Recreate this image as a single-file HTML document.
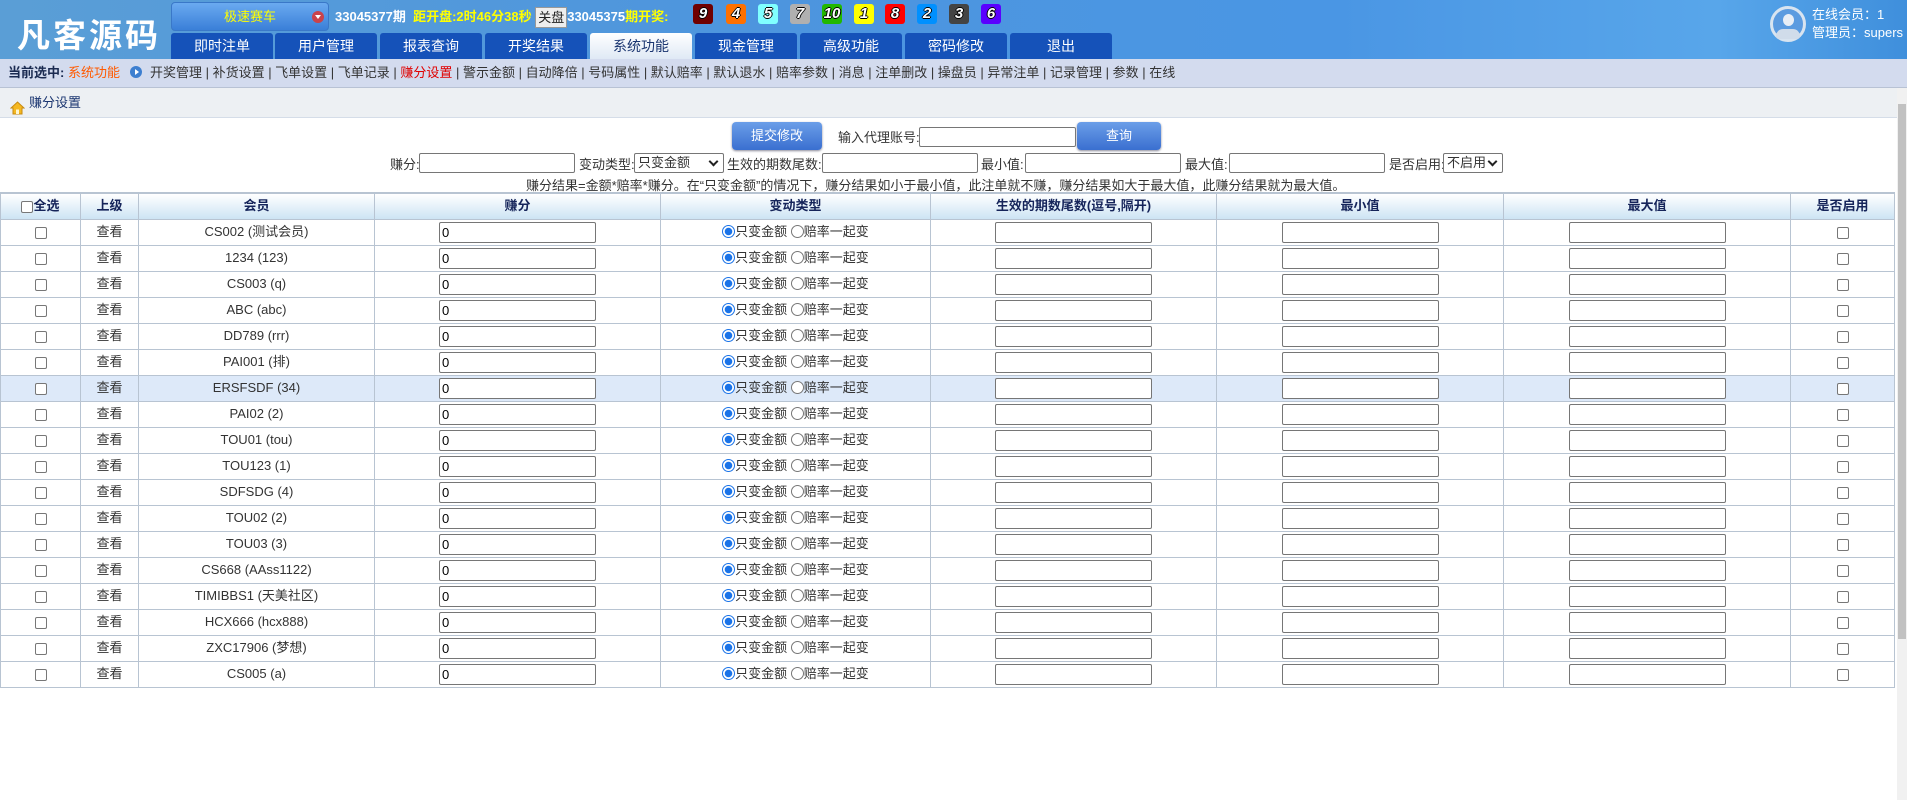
<!DOCTYPE html>
<html><head><meta charset="utf-8">
<style>
*{margin:0;padding:0;box-sizing:border-box}
body{width:1907px;height:800px;overflow:hidden;background:#fff;font-family:"Liberation Sans","Noto Sans CJK SC",sans-serif;font-size:13px;color:#333;position:relative}
#hd{position:absolute;left:0;top:0;width:1907px;height:59px;background:linear-gradient(90deg,#5a9ed6 0%,#4d95de 40%,#4a96e4 70%,#58a6ea 90%,#3f8fdc 100%)}
#logo{position:absolute;left:17px;top:9px;font-size:33px;font-weight:bold;color:#fff;letter-spacing:3px;font-family:"Noto Sans CJK SC",sans-serif}
#dd{position:absolute;left:171px;top:2px;width:158px;height:29px;border-radius:4px;background:linear-gradient(#6aaaf0,#3a7fd8);border:1px solid #3a78c8;color:#ff0;text-align:center;line-height:27px;font-size:13px}
#dd i{position:absolute;left:140px;top:8px;width:12px;height:12px;border-radius:50%;background:#c9424a}
#dd i:after{content:"";position:absolute;left:3px;top:4px;border:3px solid transparent;border-top:4px solid #fff}
#st{position:absolute;left:335px;top:7px;font-weight:bold;font-size:13px;white-space:nowrap;color:#fff;line-height:18px}
#st .y{color:#ff0}
#st .b{display:inline-block;background:#eee;color:#222;font-weight:normal;border:1px solid #999;padding:0 2px;height:21px;line-height:19px;vertical-align:middle}
.ball{position:absolute;top:4px;width:20px;height:20px;border-radius:3px;color:#fff;font-weight:bold;font-style:italic;font-size:15px;text-align:center;line-height:20px;text-shadow:-1px 0 #000,1px 0 #000,0 -1px #000,0 1px #000}
.tab{position:absolute;top:33px;width:102px;height:26px;background:#1552b9;color:#fff;font-size:14px;text-align:center;line-height:26px;border-radius:3px 3px 0 0}
.tab.on{background:linear-gradient(#fff,#dfe9f5);color:#1a3570}
#usr{position:absolute;left:1770px;top:6px;width:36px;height:36px;border-radius:50%;border:3px solid #d8e4f0;background:#5b9be0}
#usr:before{content:"";position:absolute;left:10px;top:5px;width:11px;height:12px;border-radius:50%;background:#e8eef6}
#usr:after{content:"";position:absolute;left:3px;top:20px;width:24px;height:10px;border-radius:10px 10px 4px 4px;background:#d0dcea}
#ui{position:absolute;left:1812px;top:6px;color:#fff;font-size:13px;line-height:18px}
#nav{position:absolute;left:0;top:59px;width:1907px;height:29px;background:#d3dbee;border-bottom:1px solid #b8c2d4;line-height:28px;padding-left:8px;white-space:nowrap;color:#333}
#nav b{color:#1a2a50}
#nav .o{color:#ff5a00}
#nav .r{color:#e00000}
#nav .ic{display:inline-block;width:12px;height:12px;border-radius:50%;background:#3d7fd0;vertical-align:-1px;margin:0 8px 0 10px;position:relative}
#nav .ic:after{content:"";position:absolute;left:5px;top:3px;border:3px solid transparent;border-left:4px solid #fff}
#bc{position:absolute;left:0;top:88px;width:1897px;height:30px;background:#edf0f3;border-bottom:1px solid #d5dde8;line-height:30px;padding-left:29px;color:#1a3570}
#bc i{position:absolute;left:10px;top:8px;width:15px;height:14px}
.btn{position:absolute;height:28px;border-radius:4px;background:linear-gradient(#6b9ee8,#3a6fd0);color:#fff;text-align:center;line-height:28px;font-size:13px;box-shadow:0 1px 2px #889}
.inp{position:absolute;height:20px;border:1px solid #767676;background:#fff;border-radius:2px}
.lbl{position:absolute;white-space:nowrap;color:#333}
.sel{position:absolute;height:20px;border:1px solid #767676;border-radius:2px;background:#fff;font-size:13px;line-height:18px;padding-left:3px}
.sel:after{content:"";position:absolute;right:6px;top:4px;width:5px;height:5px;border-right:2px solid #222;border-bottom:2px solid #222;transform:rotate(45deg)}
table{position:absolute;left:0;top:192px;width:1894px;border-collapse:collapse;table-layout:fixed}
td,th{border:1px solid #b8c4d2;height:26px;text-align:center;font-size:13px;line-height:16px;vertical-align:middle;padding:0}
th{background:linear-gradient(#fff,#cde4f4);color:#15245a;font-weight:bold}
tr:first-child th{border-top:2px solid #b8c4d2}
tr.hl td{background:#dde9f9}
.cb{display:inline-block;width:12px;height:12px;border:1px solid #777;border-radius:2px;background:#fff;vertical-align:middle}
.ti{display:inline-block;width:157px;height:21px;border:1px solid #767676;border-radius:2px;background:#fff;text-align:left;padding-left:2px;line-height:19px;vertical-align:middle;color:#000}
.rd{display:inline-block;width:13px;height:13px;border-radius:50%;border:1px solid #777;vertical-align:middle;background:#fff;margin-top:-2px}
.rd.on{border:1px solid #1a73e8;background:radial-gradient(circle,#1a73e8 0,#1a73e8 3.5px,#fff 4px)}
#sb{position:absolute;left:1897px;top:88px;width:10px;height:712px;background:#f1f1f1}
#sb i{position:absolute;left:1px;top:16px;width:8px;height:535px;background:#c1c1c1}
</style></head><body>
<div id="hd">
<div id="logo">凡客源码</div>
<div id="dd">极速赛车<i></i></div>
<div id="st">33045377期&nbsp; <span class="y">距开盘:</span><span class="y">2时46分38秒</span> <span class="b">关盘</span>33045375<span class="y">期开奖:</span></div>
<div class="ball" style="left:693px;background:#700000">9</div>
<div class="ball" style="left:726px;background:#ff7000">4</div>
<div class="ball" style="left:758px;background:#80ffff">5</div>
<div class="ball" style="left:790px;background:#b0b0b0">7</div>
<div class="ball" style="left:822px;background:#22b800">10</div>
<div class="ball" style="left:854px;background:#ffff00">1</div>
<div class="ball" style="left:885px;background:#ff0000">8</div>
<div class="ball" style="left:917px;background:#0090ff">2</div>
<div class="ball" style="left:949px;background:#444">3</div>
<div class="ball" style="left:981px;background:#5a00ff">6</div>
<div class="tab" style="left:171px">即时注单</div>
<div class="tab" style="left:275px">用户管理</div>
<div class="tab" style="left:380px">报表查询</div>
<div class="tab" style="left:485px">开奖结果</div>
<div class="tab on" style="left:590px">系统功能</div>
<div class="tab" style="left:695px">现金管理</div>
<div class="tab" style="left:800px">高级功能</div>
<div class="tab" style="left:905px">密码修改</div>
<div class="tab" style="left:1010px">退出</div>
<div id="usr"></div>
<div id="ui">在线会员：1<br>管理员：supers</div>
</div>
<div id="nav"><b>当前选中:</b> <span class="o">系统功能</span><span class="ic"></span>开奖管理 | 补货设置 | 飞单设置 | 飞单记录 | <span class="r">赚分设置</span> | 警示金额 | 自动降倍 | 号码属性 | 默认赔率 | 默认退水 | 赔率参数 | 消息 | 注单删改 | 操盘员 | 异常注单 | 记录管理 | 参数 | 在线</div>
<div id="bc"><i><svg width="15" height="14" viewBox="0 0 15 14"><path d="M7.5 1 L14 7 H12 V13 H3 V7 H1 Z" fill="#f5b820" stroke="#c88a10" stroke-width="1"/><rect x="6" y="8.5" width="3" height="4.5" fill="#fff6d0"/></svg></i>赚分设置</div>
<div class="btn" style="left:732px;top:122px;width:90px">提交修改</div>
<div class="lbl" style="left:838px;top:127px">输入代理账号:</div>
<div class="inp" style="left:919px;top:127px;width:157px"></div>
<div class="btn" style="left:1077px;top:122px;width:84px">查询</div>
<div class="lbl" style="left:390px;top:154px">赚分:</div>
<div class="inp" style="left:419px;top:153px;width:156px"></div>
<div class="lbl" style="left:579px;top:154px">变动类型:</div>
<div class="sel" style="left:634px;top:153px;width:90px">只变金额</div>
<div class="lbl" style="left:727px;top:154px">生效的期数尾数:</div>
<div class="inp" style="left:822px;top:153px;width:156px"></div>
<div class="lbl" style="left:981px;top:154px">最小值:</div>
<div class="inp" style="left:1025px;top:153px;width:156px"></div>
<div class="lbl" style="left:1185px;top:154px">最大值:</div>
<div class="inp" style="left:1229px;top:153px;width:156px"></div>
<div class="lbl" style="left:1389px;top:154px">是否启用:</div>
<div class="sel" style="left:1443px;top:153px;width:60px">不启用</div>
<div class="lbl" style="left:526px;top:175px">赚分结果=金额*赔率*赚分。在“只变金额”的情况下，赚分结果如小于最小值，此注单就不赚，赚分结果如大于最大值，此赚分结果就为最大值。</div>
<table>
<colgroup><col style="width:80px"><col style="width:58px"><col style="width:236px"><col style="width:286px"><col style="width:270px"><col style="width:286px"><col style="width:287px"><col style="width:287px"><col style="width:104px"></colgroup>
<tr><th><span class="cb"></span>全选</th><th>上级</th><th>会员</th><th>赚分</th><th>变动类型</th><th>生效的期数尾数(逗号,隔开)</th><th>最小值</th><th>最大值</th><th>是否启用</th></tr>
<tr><td><span class="cb"></span></td><td>查看</td><td>CS002 (测试会员)</td><td><span class="ti">0</span></td><td><span class="rd on"></span>只变金额 <span class="rd"></span>赔率一起变</td><td><span class="ti"></span></td><td><span class="ti"></span></td><td><span class="ti"></span></td><td><span class="cb"></span></td></tr>
<tr><td><span class="cb"></span></td><td>查看</td><td>1234 (123)</td><td><span class="ti">0</span></td><td><span class="rd on"></span>只变金额 <span class="rd"></span>赔率一起变</td><td><span class="ti"></span></td><td><span class="ti"></span></td><td><span class="ti"></span></td><td><span class="cb"></span></td></tr>
<tr><td><span class="cb"></span></td><td>查看</td><td>CS003 (q)</td><td><span class="ti">0</span></td><td><span class="rd on"></span>只变金额 <span class="rd"></span>赔率一起变</td><td><span class="ti"></span></td><td><span class="ti"></span></td><td><span class="ti"></span></td><td><span class="cb"></span></td></tr>
<tr><td><span class="cb"></span></td><td>查看</td><td>ABC (abc)</td><td><span class="ti">0</span></td><td><span class="rd on"></span>只变金额 <span class="rd"></span>赔率一起变</td><td><span class="ti"></span></td><td><span class="ti"></span></td><td><span class="ti"></span></td><td><span class="cb"></span></td></tr>
<tr><td><span class="cb"></span></td><td>查看</td><td>DD789 (rrr)</td><td><span class="ti">0</span></td><td><span class="rd on"></span>只变金额 <span class="rd"></span>赔率一起变</td><td><span class="ti"></span></td><td><span class="ti"></span></td><td><span class="ti"></span></td><td><span class="cb"></span></td></tr>
<tr><td><span class="cb"></span></td><td>查看</td><td>PAI001 (排)</td><td><span class="ti">0</span></td><td><span class="rd on"></span>只变金额 <span class="rd"></span>赔率一起变</td><td><span class="ti"></span></td><td><span class="ti"></span></td><td><span class="ti"></span></td><td><span class="cb"></span></td></tr>
<tr class="hl"><td><span class="cb"></span></td><td>查看</td><td>ERSFSDF (34)</td><td><span class="ti">0</span></td><td><span class="rd on"></span>只变金额 <span class="rd"></span>赔率一起变</td><td><span class="ti"></span></td><td><span class="ti"></span></td><td><span class="ti"></span></td><td><span class="cb"></span></td></tr>
<tr><td><span class="cb"></span></td><td>查看</td><td>PAI02 (2)</td><td><span class="ti">0</span></td><td><span class="rd on"></span>只变金额 <span class="rd"></span>赔率一起变</td><td><span class="ti"></span></td><td><span class="ti"></span></td><td><span class="ti"></span></td><td><span class="cb"></span></td></tr>
<tr><td><span class="cb"></span></td><td>查看</td><td>TOU01 (tou)</td><td><span class="ti">0</span></td><td><span class="rd on"></span>只变金额 <span class="rd"></span>赔率一起变</td><td><span class="ti"></span></td><td><span class="ti"></span></td><td><span class="ti"></span></td><td><span class="cb"></span></td></tr>
<tr><td><span class="cb"></span></td><td>查看</td><td>TOU123 (1)</td><td><span class="ti">0</span></td><td><span class="rd on"></span>只变金额 <span class="rd"></span>赔率一起变</td><td><span class="ti"></span></td><td><span class="ti"></span></td><td><span class="ti"></span></td><td><span class="cb"></span></td></tr>
<tr><td><span class="cb"></span></td><td>查看</td><td>SDFSDG (4)</td><td><span class="ti">0</span></td><td><span class="rd on"></span>只变金额 <span class="rd"></span>赔率一起变</td><td><span class="ti"></span></td><td><span class="ti"></span></td><td><span class="ti"></span></td><td><span class="cb"></span></td></tr>
<tr><td><span class="cb"></span></td><td>查看</td><td>TOU02 (2)</td><td><span class="ti">0</span></td><td><span class="rd on"></span>只变金额 <span class="rd"></span>赔率一起变</td><td><span class="ti"></span></td><td><span class="ti"></span></td><td><span class="ti"></span></td><td><span class="cb"></span></td></tr>
<tr><td><span class="cb"></span></td><td>查看</td><td>TOU03 (3)</td><td><span class="ti">0</span></td><td><span class="rd on"></span>只变金额 <span class="rd"></span>赔率一起变</td><td><span class="ti"></span></td><td><span class="ti"></span></td><td><span class="ti"></span></td><td><span class="cb"></span></td></tr>
<tr><td><span class="cb"></span></td><td>查看</td><td>CS668 (AAss1122)</td><td><span class="ti">0</span></td><td><span class="rd on"></span>只变金额 <span class="rd"></span>赔率一起变</td><td><span class="ti"></span></td><td><span class="ti"></span></td><td><span class="ti"></span></td><td><span class="cb"></span></td></tr>
<tr><td><span class="cb"></span></td><td>查看</td><td>TIMIBBS1 (天美社区)</td><td><span class="ti">0</span></td><td><span class="rd on"></span>只变金额 <span class="rd"></span>赔率一起变</td><td><span class="ti"></span></td><td><span class="ti"></span></td><td><span class="ti"></span></td><td><span class="cb"></span></td></tr>
<tr><td><span class="cb"></span></td><td>查看</td><td>HCX666 (hcx888)</td><td><span class="ti">0</span></td><td><span class="rd on"></span>只变金额 <span class="rd"></span>赔率一起变</td><td><span class="ti"></span></td><td><span class="ti"></span></td><td><span class="ti"></span></td><td><span class="cb"></span></td></tr>
<tr><td><span class="cb"></span></td><td>查看</td><td>ZXC17906 (梦想)</td><td><span class="ti">0</span></td><td><span class="rd on"></span>只变金额 <span class="rd"></span>赔率一起变</td><td><span class="ti"></span></td><td><span class="ti"></span></td><td><span class="ti"></span></td><td><span class="cb"></span></td></tr>
<tr><td><span class="cb"></span></td><td>查看</td><td>CS005 (a)</td><td><span class="ti">0</span></td><td><span class="rd on"></span>只变金额 <span class="rd"></span>赔率一起变</td><td><span class="ti"></span></td><td><span class="ti"></span></td><td><span class="ti"></span></td><td><span class="cb"></span></td></tr>
</table>
<div id="sb"><i></i></div>
</body></html>
